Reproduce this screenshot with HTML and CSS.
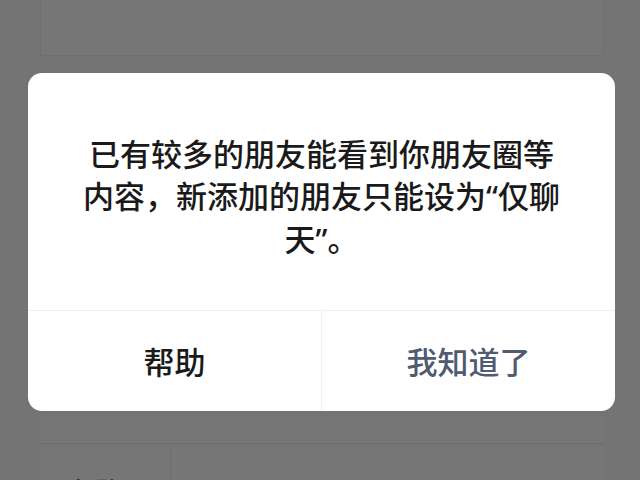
FILE: index.html
```html
<!DOCTYPE html>
<html lang="zh-CN">
<head>
  <meta charset="UTF-8">
  <title>朋友权限</title>
  <link rel="stylesheet" href="styles.css">
</head>
<body>
  <!-- settings page behind the mask -->
  <div class="page">
    <div class="card card-top"></div>
    <div class="gap"></div>
    <div class="card card-row"></div>
    <div class="card card-split">
      <div class="cell cell-left"><span class="cell-text">仅聊天</span></div>
      <div class="cell"></div>
    </div>
  </div>

  <div class="mask">
    <div class="dialog">
      <div class="dialog-body">
        已有较多的朋友能看到你朋友圈等<br>
        内容，新添加的朋友只能设为<span class="quote">“</span>仅聊<br>
        天<span class="quote">”</span>。
      </div>
      <div class="dialog-actions">
        <button class="btn">帮助</button>
        <button class="btn btn-primary">我知道了</button>
      </div>
    </div>
  </div>
</body>
</html>
```

FILE: styles.css
```css
body {
  margin: 0;
  width: 640px;
  height: 480px;
  overflow: hidden;
  background-color: #747474;
  font-family: "Noto Sans CJK SC", "Noto Sans", sans-serif;
}
.page {
  padding: 0 36px 0 40px;
}
.card {
  background-color: #767676;
}
.card-top {
  height: 55px;
  border: 1px solid #6f6f6f;
  border-top: none;
}
.gap {
  height: 360px;
}
.card-row {
  height: 27px;
  border-bottom: 1px solid #6c6c6c;
}
.card-split {
  display: flex;
  height: 40px;
  margin-top: 3px;
}
.cell {
  flex: 1;
}
.cell-left {
  flex: 0 0 131px;
  box-sizing: border-box;
  border-right: 1px solid #6e6e6e;
  padding: 24px 0 0 30px;
  overflow: hidden;
}
.cell-text {
  font-size: 26px;
  font-weight: 500;
  color: #2a2a2a;
}
.mask {
  position: absolute;
  top: 0;
  left: 0;
  width: 640px;
  height: 480px;
}
.dialog {
  position: absolute;
  top: 73px;
  left: 28px;
  width: 587px;
  height: 338px;
  background-color: #fff;
  border-radius: 14px;
  display: flex;
  flex-direction: column;
}
.dialog-body {
  height: 238px;
  box-sizing: border-box;
  padding-top: 59px;
  text-align: center;
  white-space: nowrap;
  font-size: 31px;
  font-weight: 500;
  line-height: 42px;
  color: #1a1a1a;
  border-bottom: 1px solid #f0f0f0;
}
.quote {
  font-family: "Noto Sans", sans-serif;
}
.dialog-actions {
  flex: 1;
  display: flex;
}
.btn {
  flex: 1;
  background: none;
  border: none;
  font-family: inherit;
  font-size: 31px;
  font-weight: 500;
  color: #1a1a1a;
  padding: 0 0 2px;
}
.btn + .btn {
  border-left: 1px solid #f0f0f0;
}
.btn-primary {
  color: #505a70;
}
```
